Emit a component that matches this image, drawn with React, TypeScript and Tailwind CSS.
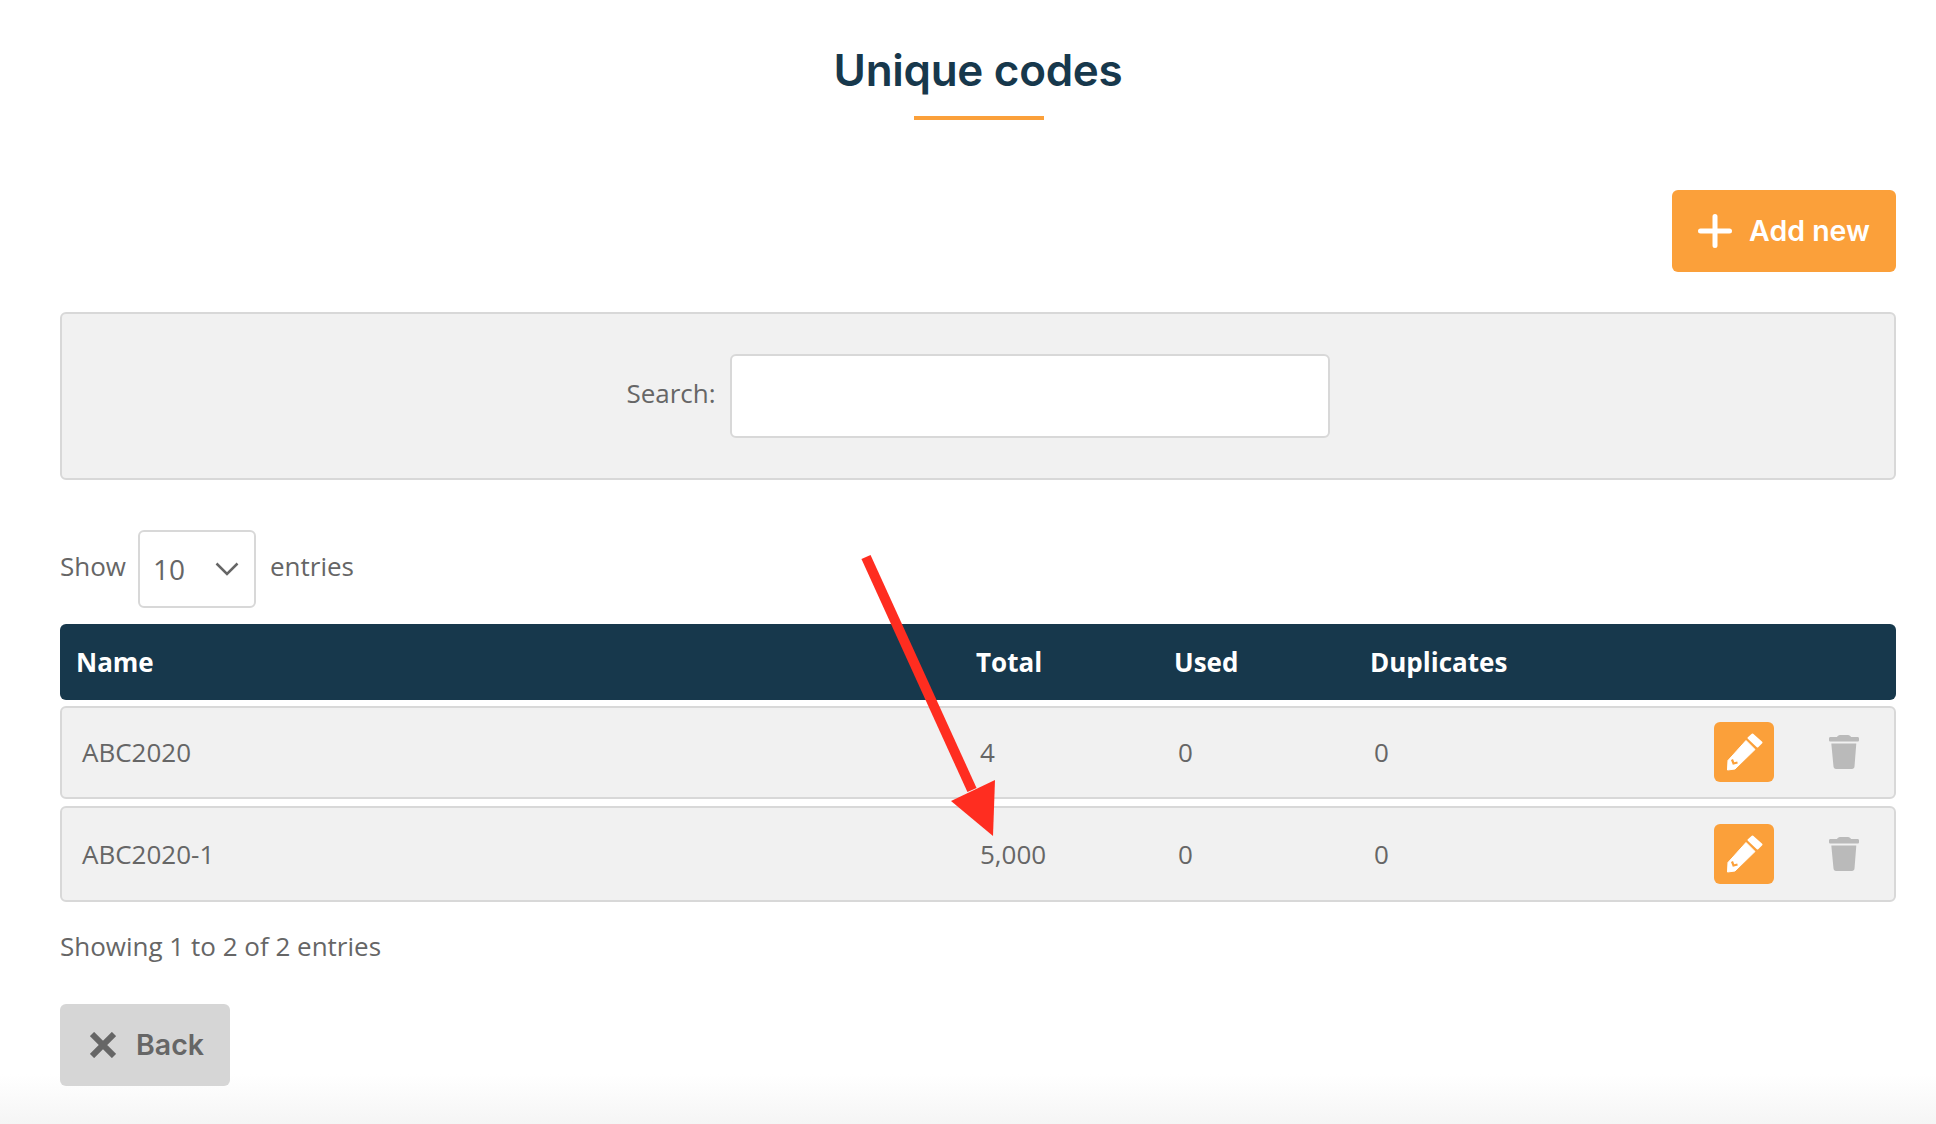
import React from "react";

const body = "font-['Open_Sans','Noto_Sans',sans-serif]";
const head = "font-['Inter','Lato',sans-serif]";

function Trash() {
  return (
    <svg viewBox="0 0 30 34" className="w-[30px] h-[34px]" fill="#bababa">
      <path d="M11 0h8c1.500 0 2.500 1 3 2h6.500c1 0 1.500.6 1.500 1.500V5c0 1-.5 1.500-1.500 1.500h-27C.5 6.500 0 6 0 5V3.500C0 2.600.5 2 1.500 2H8c.5-1 1.500-2 3-2z" />
      <path d="M2.300 8.500h25L25.500 31.500c-.1 1.500-1.100 2.500-2.500 2.500H7c-1.400 0-2.400-1-2.500-2.500L2.300 8.500z" />
    </svg>
  );
}

function Pencil() {
  return (
    <svg viewBox="0 0 60 60" className="w-[60px] h-[60px]">
      <path d="M38.500 12.500 47.500 20.500 43.500 24.500 34.500 16z" fill="white" stroke="white" strokeWidth="2" strokeLinejoin="round" />
      <path d="M32 18.500 41 27.500 21 47 13.500 48 14 38.500z" fill="white" stroke="white" strokeWidth="1" strokeLinejoin="round" />
      <path d="M18 37.500 19.500 41.500 23.500 40.500" fill="none" stroke="#fba03a" strokeWidth="2.200" />
    </svg>
  );
}

function Row({ name, total, h, mt, actions }: { name: string; total: string; h: string; mt: string; actions: string }) {
  return (
    <div className={`${h} ${mt} grid grid-cols-[898px_198px_196px_1fr] items-center pl-[20px] pr-[35px] border-2 border-[#d8d8d8] rounded-[6px] bg-[#f1f1f1]`}>
      <span>{name}</span>
      <span>{total}</span>
      <span>0</span>
      <div className="flex items-center justify-between">
        <span>0</span>
        <div className={`${actions} flex items-center gap-[55px]`}>
          <button className="w-[60px] h-[60px] rounded-[6px] bg-[#fba03a] flex items-center justify-center">
            <Pencil />
          </button>
          <Trash />
        </div>
      </div>
    </div>
  );
}

export default function App() {
  return (
    <div className={`${body} relative min-h-[1124px] bg-white text-[#666] text-[26px] overflow-hidden`}>
      <div className="absolute inset-x-0 bottom-0 h-[50px] bg-linear-to-b from-white to-[#f5f5f5]" />
      <div className="relative pl-[60px] pr-[40px] pt-[40px]">
        <h1 className={`${head} text-center text-[#17384c] text-[44px] leading-[60px] font-semibold tracking-[-0.3px]`}>Unique codes</h1>
        <div className="mx-auto mt-[16px] w-[130px] h-[4px] bg-[#fba03a] translate-x-[1px]" />

        <div className="mt-[70px] flex justify-end">
          <button className={`${head} w-[224px] h-[82px] rounded-[6px] bg-[#fba03a] text-white text-[28.5px] font-semibold flex items-center justify-center gap-[17px]`}>
            <svg viewBox="0 0 34 34" className="w-[34px] h-[34px]" fill="none" stroke="white" strokeWidth="5" strokeLinecap="round">
              <path d="M17 2.500v29M2.500 17h29" />
            </svg>
            Add new
          </button>
        </div>

        <div className="mt-[40px] h-[168px] border-2 border-[#d8d8d8] rounded-[6px] bg-[#f1f1f1] flex items-center justify-center gap-[14px]">
          <label className="relative top-[-3px]">Search:</label>
          <div className="w-[600px] h-[84px] bg-white border-2 border-[#d8d8d8] rounded-[6px]" />
        </div>

        <div className="mt-[50px] flex items-center h-[78px]">
          <span className="relative top-[-3px]">Show</span>
          <div className="ml-[12px] w-[118px] h-[78px] border-2 border-[#d8d8d8] rounded-[6px] flex items-center justify-between pl-[13px] pr-[15px] text-[28px]">
            <span>10</span>
            <svg viewBox="0 0 24 14" className="w-[24px] h-[14px]" fill="none" stroke="#666" strokeWidth="2.500">
              <path d="M1.500 1.500 12 12 22.500 1.500" />
            </svg>
          </div>
          <span className="ml-[14px] relative top-[-3px]">entries</span>
        </div>

        <div className="mt-[16px] h-[76px] grid grid-cols-[900px_198px_196px_1fr] items-center pl-[16px] rounded-[6px] bg-[#17384c] text-white font-bold">
          <span>Name</span>
          <span>Total</span>
          <span>Used</span>
          <span>Duplicates</span>
        </div>

        <Row name="ABC2020" total="4" h="h-[93px]" mt="mt-[6px]" actions="mb-[2px]" />
        <Row name="ABC2020-1" total="5,000" h="h-[96px]" mt="mt-[7px]" actions="mb-0" />

        <div className="mt-[26px] leading-[36px]">Showing 1 to 2 of 2 entries</div>

        <button className={`${head} mt-[40px] w-[170px] h-[82px] rounded-[6px] bg-[#d6d6d6] text-[#666] text-[28.5px] font-semibold flex items-center pl-[30px] gap-[20px]`}>
          <svg viewBox="0 0 26 26" className="w-[26px] h-[26px]" fill="none" stroke="#666" strokeWidth="6">
            <path d="M2 2l22 22M24 2 2 24" />
          </svg>
          Back
        </button>
      </div>

      <svg className="absolute left-0 top-0 pointer-events-none" width="1936" height="1124" viewBox="0 0 1936 1124">
        <path d="M866 557 972 790" stroke="#ff2d20" strokeWidth="10" fill="none" />
        <path d="M995 780 951 801 993 836z" fill="#ff2d20" />
      </svg>
    </div>
  );
}
